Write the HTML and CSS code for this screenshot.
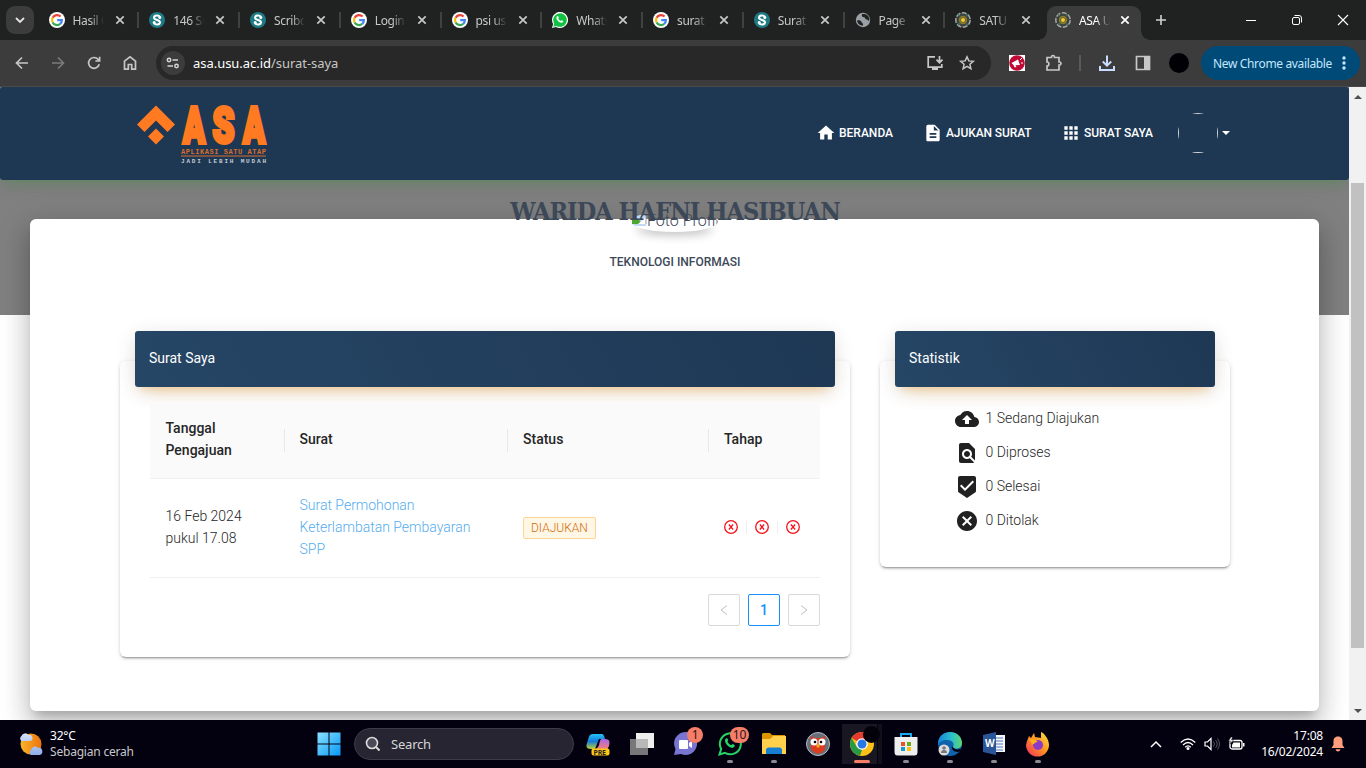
FILE: index.html
```html
<!DOCTYPE html>
<html lang="id">
<head>
<meta charset="utf-8">
<title>ASA USU</title>
<link rel="stylesheet" href="styles.css">
</head>
<body>
<svg class="defs" aria-hidden="true">
  <symbol id="google" viewBox="0 0 16 16"><circle cx="8" cy="8" r="8" fill="#fff"/><g fill="none" stroke-width="2.2"><path d="M11.6 4.6A5 5 0 0 0 3.6 5.7" stroke="#ea4335"/><path d="M3.6 5.7a5 5 0 0 0 0 4.7" stroke="#fbbc05"/><path d="M3.6 10.4a5 5 0 0 0 7.6 1.5" stroke="#34a853"/><path d="M8.2 8.1h4.7a5 5 0 0 1-1.7 3.8" stroke="#4285f4"/></g></symbol>
  <symbol id="scribd" viewBox="0 0 16 16"><circle cx="8" cy="8" r="8" fill="#1e7b85"/><path d="M11.200 5C9.500 2.800 5 3.200 5 5.800c0 2.700 6 1.700 6 4.500 0 2.700-4.600 2.900-6.200.900" fill="none" stroke="#fff" stroke-width="2"/><circle cx="10.800" cy="5.600" r="1.500" fill="#fff"/><circle cx="5.200" cy="10.400" r="1.500" fill="#fff"/></symbol>
  <symbol id="wa" viewBox="0 0 16 16"><path d="M0 16l1.100-4A8 8 0 1 1 4 14.900z" fill="#fff"/><path d="M1.300 14.700l.9-3.100a6.800 6.800 0 1 1 2.300 2.300z" fill="#12c143"/><path d="M5.100 4.300c.8-.6 1.300-.2 1.700 1.400l-.6.8c.6 1.200 1.300 1.900 2.500 2.500l.9-.8c1.700.6 1.900.9 1.300 1.900-1 1.400-3.100.7-4.900-1-1.700-1.800-2.200-3.700-.9-4.800z" fill="#fff"/></symbol>
  <symbol id="globe" viewBox="0 0 16 16"><circle cx="8" cy="8" r="7.200" fill="#9aa0a6"/><path d="M2 8.500c2-.5 4 0 4.500 1.500s2 1 1.500 3.500c-3 0-5.500-2-6-5zM7 2c-.5 2 0 3 2 3.300s.5 2 2.500 2.200 1.500 1.500 2.800 1.300c.5-3.300-1.300-6-4.300-6.800z" fill="#202222"/></symbol>
  <symbol id="usu" viewBox="0 0 16 16"><circle cx="8" cy="8" r="7.200" fill="#3a4146" stroke="#a5a6a3" stroke-width="1.500" stroke-dasharray="5 1.500"/><path d="M3 2.500l2 1.500M11 4l2-1.500M3 12.500l2-1M11 12l2 1" stroke="#39754d" stroke-width="1.500"/><circle cx="8" cy="8" r="4.200" fill="#8f7d24"/><circle cx="8" cy="8" r="2.500" fill="#f0cf28" stroke="#645e42"/></symbol>
  <symbol id="x" viewBox="0 0 10 10"><path d="M1.300 1.300l7.400 7.400M8.700 1.300L1.300 8.700" stroke="currentColor" stroke-width="1.700"/></symbol>
  <symbol id="xc" viewBox="0 0 14 14"><circle cx="7" cy="7" r="6.300" fill="none" stroke="#f5121d" stroke-width="1.300"/><path d="M4.900 4.500l4.200 5M9.100 4.500l-4.200 5" stroke="#f5121d" stroke-width="1.300"/></symbol>
</svg>

<header class="tabs">
  <div class="tab-search"><svg width="10" height="7" viewBox="0 0 10 7"><path d="M1 1l4 4 4-4" fill="none" stroke="#e3e3e3" stroke-width="1.800"/></svg></div>
  <div class="tab"><svg class="fav"><use href="#google"/></svg><span>Hasil Cari</span><svg class="close"><use href="#x"/></svg></div>
  <div class="tab"><svg class="fav"><use href="#scribd"/></svg><span>146 Surat</span><svg class="close"><use href="#x"/></svg></div>
  <div class="tab"><svg class="fav"><use href="#scribd"/></svg><span>Scribd</span><svg class="close"><use href="#x"/></svg></div>
  <div class="tab"><svg class="fav"><use href="#google"/></svg><span>Login</span><svg class="close"><use href="#x"/></svg></div>
  <div class="tab"><svg class="fav"><use href="#google"/></svg><span>psi usu</span><svg class="close"><use href="#x"/></svg></div>
  <div class="tab"><svg class="fav"><use href="#wa"/></svg><span>WhatsApp</span><svg class="close"><use href="#x"/></svg></div>
  <div class="tab"><svg class="fav"><use href="#google"/></svg><span>surat p</span><svg class="close"><use href="#x"/></svg></div>
  <div class="tab"><svg class="fav"><use href="#scribd"/></svg><span>Surat</span><svg class="close"><use href="#x"/></svg></div>
  <div class="tab"><svg class="fav"><use href="#globe"/></svg><span>Page</span><svg class="close"><use href="#x"/></svg></div>
  <div class="tab last"><svg class="fav"><use href="#usu"/></svg><span>SATU</span><svg class="close"><use href="#x"/></svg></div>
  <div class="tab active"><svg class="fav"><use href="#usu"/></svg><span>ASA U</span><svg class="close"><use href="#x"/></svg></div>
  <svg class="plus" width="12" height="12" viewBox="0 0 12 12"><path d="M6 1v10M1 6h10" stroke="#d0d0d0" stroke-width="1.600"/></svg>
  <div class="win">
    <svg width="12" height="12" viewBox="0 0 12 12"><path d="M1 6.500h10" stroke="#fff"/></svg>
    <svg width="12" height="12" viewBox="0 0 12 12"><g fill="none" stroke="#fff"><rect x="1.500" y="3.500" width="7" height="7" rx="1.500"/><path d="M3.500 1.500H8a2.500 2.500 0 0 1 2.500 2.500v4.500"/></g></svg>
    <svg width="12" height="12" viewBox="0 0 12 12"><path d="M1 1l10 10M11 1L1 11" stroke="#fff" stroke-width="1.100"/></svg>
  </div>
</header>

<div class="toolbar">
  <div class="slot"><svg width="16" height="16" viewBox="0 0 16 16"><path d="M14 8H3M8 2.500L2.500 8 8 13.500" class="ln"/></svg></div>
  <div class="slot dim"><svg width="16" height="16" viewBox="0 0 16 16"><path d="M2 8h11M8 2.500L13.500 8 8 13.500" class="ln"/></svg></div>
  <div class="slot"><svg width="16" height="16" viewBox="0 0 16 16"><path d="M13.200 9.200A5.400 5.400 0 1 1 12 4.300L13.500 6M13.600 1.800V6H9.400" class="ln"/></svg></div>
  <div class="slot"><svg width="16" height="16" viewBox="0 0 16 16"><path d="M2.500 6.200L8 1.800l5.500 4.400v8H9.700V9.500H6.300v4.700H2.500z" class="ln"/></svg></div>
  <div class="address">
    <div class="site"><svg width="14" height="12" viewBox="0 0 14 12"><g fill="none" stroke="#d5d5d5" stroke-width="1.500"><circle cx="3" cy="3" r="1.700"/><path d="M6.500 3H12M1.500 9h5.500"/><circle cx="10.500" cy="9" r="1.700"/></g></svg></div>
    <p class="url">asa.usu.ac.id<span>/surat-saya</span></p>
    <svg class="install" width="18" height="16" viewBox="0 0 18 16"><path d="M9 1.800H2.200v10.400h13.600V9M13.500 1v6.500M10.500 4.700l3 3 3-3" class="ln"/><path d="M6 12h6v3H6z" fill="#c7c7c7"/></svg>
    <svg width="16" height="16" viewBox="0 0 16 16"><path d="M8 1.800l1.800 4.100 4.500.4-3.400 3 1 4.400L8 11.400l-3.900 2.300 1-4.400-3.400-3 4.500-.4z" class="ln thin"/></svg>
  </div>
  <div class="slot ext"><svg width="16" height="16" viewBox="0 0 16 16"><path fill="#fff" d="M0 0h16v16H0z"/><circle cx="8" cy="8" r="7.800" fill="#bd0b35"/><path d="M2.500 8L9 4.500l2 5.500-4.500.2 1 2H5.500L4.500 10z" fill="#fff"/><path d="M11 5l2-2M12 8h2" stroke="#fff"/></svg></div>
  <div class="slot puzzle"><svg width="18" height="18" viewBox="0 0 18 18"><path d="M2 3.500h4.500V3a1.500 1.500 0 0 1 3 0v.5H14V8h.5a1.500 1.500 0 0 1 0 3H14v5H2v-4c2.500 0 2.500-4 0-4z" class="ln"/></svg></div>
  <i class="sep"></i>
  <div class="slot"><svg width="18" height="18" viewBox="0 0 18 18"><path d="M9 1.500v10M4.800 7.500L9 11.700l4.200-4.200M2 12v4h14v-4" fill="none" stroke="#c8dcff" stroke-width="2"/></svg></div>
  <div class="slot"><svg width="16" height="16" viewBox="0 0 16 16"><path d="M1.500 1.500h13v13h-13z" class="ln"/><path d="M9 1h6v14H9z" fill="#c7c7c7"/></svg></div>
  <div class="slot"><b class="profile"></b></div>
  <div class="update"><span>New Chrome available</span><svg width="4" height="16" viewBox="0 0 4 16"><g fill="#c2e7ff"><circle cx="2" cy="3" r="1.700"/><circle cx="2" cy="8" r="1.700"/><circle cx="2" cy="13" r="1.700"/></g></svg></div>
</div>

<div class="viewport">
  <main class="page">
    <nav class="navbar">
      <svg class="logo" width="132" height="62" viewBox="0 0 132 62">
        <path d="M20 3.500l19 19-7.500 7.500L20 18.500 8.500 30 1 22.500zM20 26.500l8 8-8 8-8-8z" fill="#ff7a21"/>
        <g class="asa"><text x="47" y="40.500" textLength="22" lengthAdjust="spacingAndGlyphs">A</text><text x="76.500" y="40.500" textLength="22" lengthAdjust="spacingAndGlyphs">S</text><text x="107" y="40.500" textLength="22" lengthAdjust="spacingAndGlyphs">A</text></g>
        <text class="tag" x="45" y="51.500" textLength="85">APLIKASI SATU ATAP</text>
        <path d="M45 54h85" stroke="#d96d2c"/>
        <text class="tag sub" x="45" y="61" textLength="85">JADI LEBIH MUDAH</text>
      </svg>
      <div class="links">
        <a class="l1"><svg class="ic"><path d="M8.300 16.600v-5h3.400v5h4.200V10h2.400L10 2.500 1.700 10h2.400v6.600z"/></svg>BERANDA</a>
        <a class="l2"><svg class="ic" viewBox="0 0 24 24"><path d="M14 2H6c-1.100 0-2 .9-2 2v16c0 1.100.9 2 2 2h12c1.100 0 2-.9 2-2V8l-6-6zm2 16H8v-2h8v2zm0-4H8v-2h8v2zm-3-5V3.500L18.500 9H13z"/></svg>AJUKAN SURAT</a>
        <a class="l3"><svg class="ic" viewBox="0 0 24 24"><path d="M4 8h4V4H4v4zm6 12h4v-4h-4v4zm-6 0h4v-4H4v4zm0-6h4v-4H4v4zm6 0h4v-4h-4v4zm6-10v4h4V4h-4zm-6 4h4V4h-4v4zm6 6h4v-4h-4v4zm0 6h4v-4h-4v4z"/></svg>SURAT SAYA</a>
        <a class="user"><i class="pic"><i></i></i><b class="caret"></b></a>
      </div>
    </nav>
    <section class="sheet">
      <div class="identity">
        <div class="photo"><svg width="16" height="16" viewBox="0 0 16 16"><path d="M1 1h10l4 4v10H1z" fill="#c3d8f5"/><path d="M1 13V9l5-2 4 4 5 1v1z" fill="#4ca62f"/><path d="M7 13L15 6v7z" fill="#fff"/><path d="M11 1l4 4v8" fill="none" stroke="#999"/></svg>Foto Profil</div>
        <h1>WARIDA HAFNI HASIBUAN</h1>
        <h2>TEKNOLOGI INFORMASI</h2>
      </div>
      <div class="columns">
        <article class="card letters">
          <h3>Surat Saya</h3>
          <div class="table">
            <div class="row head"><div>Tanggal Pengajuan</div><div>Surat</div><div>Status</div><div>Tahap</div></div>
            <div class="row"><div>16 Feb 2024 pukul 17.08</div><div><a>Surat Permohonan Keterlambatan Pembayaran SPP</a></div><div><span class="badge">DIAJUKAN</span></div><div class="steps"><svg><use href="#xc"/></svg><i></i><svg><use href="#xc"/></svg><i></i><svg><use href="#xc"/></svg></div></div>
          </div>
          <div class="pager">
            <span><svg width="8" height="12" viewBox="0 0 8 12"><path d="M7 1.500L1 6l6 4.500" fill="none" stroke="#bfbfbf"/></svg></span>
            <span class="on">1</span>
            <span><svg width="8" height="12" viewBox="0 0 8 12"><path d="M1 1.500L7 6l-6 4.500" fill="none" stroke="#bfbfbf"/></svg></span>
          </div>
        </article>
        <article class="card stats">
          <h3>Statistik</h3>
          <ul>
            <li><svg viewBox="0 0 24 24"><path d="M19.350 10.040C18.670 6.590 15.640 4 12 4 9.110 4 6.600 5.640 5.350 8.040 2.340 8.360 0 10.910 0 14c0 3.310 2.690 6 6 6h13c2.760 0 5-2.240 5-5 0-2.640-2.050-4.780-4.650-4.960zM14 13v4h-4v-4H7l5-5 5 5h-3z"/></svg>1 Sedang Diajukan</li>
            <li><svg viewBox="0 0 24 24"><path d="M20 19.590V8l-6-6H6c-1.100 0-1.990.9-1.990 2L4 20c0 1.100.89 2 1.990 2H18c.45 0 .85-.15 1.190-.4l-4.430-4.430c-.8.520-1.740.830-2.760.830-2.760 0-5-2.240-5-5s2.240-5 5-5 5 2.240 5 5c0 1.020-.31 1.960-.83 2.750L20 19.590zM9 13c0 1.660 1.340 3 3 3s3-1.340 3-3-1.340-3-3-3-3 1.340-3 3z"/></svg>0 Diproses</li>
            <li><svg viewBox="0 0 24 24"><path d="M19 1H5c-1.100 0-1.990.9-1.990 2L3 15.930c0 .69.350 1.300.88 1.660L12 23l8.110-5.410c.53-.36.880-.97.890-1.660L21 3c0-1.100-.9-2-2-2zm-9 15l-5-5 1.410-1.410L10 13.170l7.590-7.590L19 7l-9 9z"/></svg>0 Selesai</li>
            <li><svg viewBox="0 0 24 24"><path d="M12 2C6.470 2 2 6.470 2 12s4.470 10 10 10 10-4.470 10-10S17.530 2 12 2zm5 13.590L15.590 17 12 13.410 8.410 17 7 15.590 10.590 12 7 8.410 8.410 7 12 10.590 15.590 7 17 8.410 13.410 12 17 15.590z"/></svg>0 Ditolak</li>
          </ul>
        </article>
      </div>
    </section>
  </main>
  <aside class="scroll"><i class="up"></i><b></b><i class="down"></i></aside>
</div>

<footer class="taskbar">
  <div class="weather">
    <svg width="26" height="26" viewBox="0 0 26 26"><defs><linearGradient id="sun" x2="1"><stop stop-color="#f7b52b"/><stop offset="1" stop-color="#ee730d"/></linearGradient><linearGradient id="cl" x2="0" y2="1"><stop stop-color="#d5e2fa"/><stop offset="1" stop-color="#8daee9"/></linearGradient></defs><circle cx="13" cy="13" r="10.500" fill="url(#sun)"/><path d="M3.500 10a3 3 0 0 1 0-5 4 4 0 0 1 7-1 3 3 0 0 1 4 3c0 2-1 3-3 3zM13 24a3 3 0 0 1 0-5 4 4 0 0 1 7-2 3.500 3.500 0 1 1 1.500 7z" fill="url(#cl)"/></svg>
    <p>32°C<span>Sebagian cerah</span></p>
  </div>
  <svg class="start" width="24" height="24" viewBox="0 0 24 24"><defs><linearGradient id="win" x2="1" y2="1"><stop stop-color="#8ae4ff"/><stop offset="1" stop-color="#0796f7"/></linearGradient></defs><path fill="url(#win)" d="M.5.500h11v11H.5zM12.500.500h11v11h-11zM.5 12.500h11v11H.5zM12.500 12.500h11v11h-11z"/></svg>
  <div class="search"><svg width="16" height="16" viewBox="0 0 16 16"><circle cx="7" cy="7" r="5.500" fill="#4b4b57" stroke="#ddd" stroke-width="1.600"/><path d="M11 11l3.500 3.500" stroke="#ddd" stroke-width="2"/></svg>Search</div>
  <div class="apps">
    <div><svg viewBox="0 0 24 24"><defs><linearGradient id="cp" x2="0" y2="1"><stop stop-color="#20c3f7"/><stop offset=".5" stop-color="#167ad7"/><stop offset="1" stop-color="#bed530"/></linearGradient><linearGradient id="cp2" x2="0" y2="1"><stop stop-color="#a368ec"/><stop offset="1" stop-color="#ff806b"/></linearGradient></defs><path d="M7 2h8c3 0 3 2 4 5h-6L9 17H5c-5 0-5-3-4-6 2-6 2-9 6-9z" fill="url(#cp)"/><path d="M16 7h3c5 0 5 3 4 7l-2 4H9l3-3c2-2 1-8 4-8z" fill="url(#cp2)"/><rect x="5.500" y="16.500" width="18" height="7" rx="2" fill="#fdc817"/><text class="pre" x="7.500" y="22.600">PRE</text></svg></div>
    <div><svg viewBox="0 0 24 24"><path d="M6 1h18v15H6z" fill="#eee"/><path d="M0 7h18v16H0z" fill="#77777a"/><path d="M6 7h12v9H6z" fill="#b8b8b9"/></svg></div>
    <div><svg viewBox="0 0 24 24"><path d="M0 23l1.500-6A11.500 11.500 0 1 1 7 22z" fill="#7774d2"/><rect x="5" y="8" width="9" height="9" rx="1" fill="#fff"/><path d="M15 11l3-2v7l-3-2z" fill="#fff"/></svg><em>1</em></div>
    <div><svg viewBox="0 0 24 24"><path d="M1.500 22.500l1.700-5.600A10.500 10.500 0 1 1 7 20.800z" fill="none" stroke="#25d366" stroke-width="2"/><path d="M8 6.500c1-.8 1.700-.3 2.300 1.800l-.8 1.200c.8 1.800 2 2.900 3.600 3.700l1.400-1.300c2.300.8 2.700 1.500 1.900 2.900-1.200 2-4.500 1-6.900-1.400C7 10.800 6.200 8 8 6.500z" fill="#25d366"/></svg><em class="w">10</em><u></u></div>
    <div><svg viewBox="0 0 24 24"><path d="M0 3c0-2 1-2 2-2h6l2 2h13v7H0z" fill="#dc9400"/><path d="M0 7h8l3-3h13v18H0z" fill="#ffd04b"/><path d="M4 22v-5l2-1.500h12l2 1.500v5z" fill="#167fd0"/></svg><u></u></div>
    <div><svg viewBox="0 0 24 24"><circle cx="12" cy="12" r="11.500" fill="#67707a" stroke="#b5bbc0"/><path d="M5 4l4 2h6l4-2v13q-7 9-14 0z" fill="#dd3c1f"/><circle cx="8" cy="10" r="3.500" fill="#fff"/><circle cx="16" cy="10" r="3.500" fill="#fff"/><circle cx="9" cy="10" r="1.300"/><circle cx="15" cy="10" r="1.300"/><path d="M12 11l-2 3 2 2 2-2z" fill="#f5aa25"/></svg></div>
    <div class="cur"><svg viewBox="0 0 24 24"><circle cx="12" cy="12" r="12" fill="#fbc116"/><path d="M12 12L1.600 6A12 12 0 0 1 22.400 6z" fill="#e33b2e"/><path d="M1.600 6L6.800 15 12 18l0 0-2 5.800A12 12 0 0 1 1.600 6z" fill="#269a47"/><circle cx="12" cy="12" r="5.800" fill="#fff"/><circle cx="12" cy="12" r="4.500" fill="#2678e8"/></svg><s></s><u></u></div>
    <div><svg viewBox="0 0 24 24"><path d="M7 6V2h10v4" fill="none" stroke="#16a9ed" stroke-width="2"/><path d="M.5 5h23v15q0 3.500-3 3.500h-17q-3 0-3-3.500z" fill="#eee"/><path d="M7 10h4v4H7z" fill="#e6532c"/><path d="M13 10h4v4h-4z" fill="#6bab1c"/><path d="M7 15h4v4H7z" fill="#179bd7"/><path d="M13 15h4v4h-4z" fill="#ffc10d"/></svg><u></u></div>
    <div><svg viewBox="0 0 24 24"><defs><linearGradient id="edge" x2="1"><stop stop-color="#1684da"/><stop offset=".6" stop-color="#2bc2c9"/><stop offset="1" stop-color="#63d56a"/></linearGradient></defs><circle cx="12" cy="12" r="12" fill="#1162ac"/><path d="M0 11C1-3 23-4 24 11c0 6-7 7-9 4 2-4-1-7-6-7-5 0-8 2-9 5z" fill="url(#edge)"/><path d="M14 14c1 3 5 4 8 3l1-1c-1 3-2 4-3 4-4 0-7-3-6-6z" fill="#03010f"/><circle cx="6" cy="18" r="5.500" fill="#ddd"/><circle cx="6" cy="16" r="1.800" fill="#777"/><path d="M3 21q0-3 3-3t3 3z" fill="#777"/></svg><u></u></div>
    <div><svg viewBox="0 0 24 24"><path d="M12 3h11v17H12z" fill="#f4f7fc"/><path d="M14 6h7M14 9h7M14 12h7M14 15h7M14 18h7" stroke="#5578b4"/><path d="M1 3l13-3v23L1 20z" fill="#2a5699"/><text class="word" x="3" y="15">W</text></svg><u></u></div>
    <div><svg viewBox="0 0 24 24"><defs><linearGradient id="ff" x1="1" x2="0" y2="1"><stop stop-color="#ffe84a"/><stop offset=".45" stop-color="#ff981f"/><stop offset="1" stop-color="#f32961"/></linearGradient></defs><path d="M1 9l2-5 2 2 3-5 1 4 6 1V0c3 1 8 7 8 13a11.400 11.400 0 0 1-23 0z" fill="url(#ff)"/><circle cx="12" cy="13" r="5" fill="#8c3bc7"/><path d="M3 7c4-1 7 1 9 3-4 0-3 3-6 2z" fill="#ffb01c"/></svg><u></u></div>
  </div>
  <div class="tray">
    <svg class="chev" width="12" height="8" viewBox="0 0 12 8"><path d="M1 7l5-5 5 5" fill="none" stroke="#fff" stroke-width="1.500"/></svg>
    <svg width="16" height="14" viewBox="0 0 16 14"><g fill="none" stroke="#fff" stroke-width="1.300"><path d="M.7 5.500q7.300-7 14.600 0M3 8q5-5 10 0M5.200 10.200q2.800-2.800 5.600 0"/></g><circle cx="8" cy="11.500" r="1.500" fill="#fff"/></svg>
    <svg width="16" height="14" viewBox="0 0 16 14"><path d="M1 5h2.500L7 1.500v11L3.500 9H1z" fill="none" stroke="#fff" stroke-width="1.200"/><path d="M9.500 4.500q2 2.500 0 5M11.500 3q3.500 4 0 8M13.500 1.500q4 5.500 0 11" fill="none" stroke="#54535e"/></svg>
    <svg width="17" height="14" viewBox="0 0 17 14"><rect x="2" y="3.500" width="12" height="8.500" rx="2" fill="none" stroke="#fff" stroke-width="1.300"/><path d="M5.500 5.500H12v5H4V8zM15 6h1.500v3.500H15z" fill="#fff"/><path d="M3 0L.5 4H3L2 7l3.500-4H3.500L4.500 0z" fill="#fff" stroke="#03010f" stroke-width=".4"/></svg>
    <p>17:08<br>16/02/2024</p>
    <svg width="14" height="16" viewBox="0 0 14 16"><path d="M7 .5C3.500.500 2.500 3 2.500 5v4L.5 12h13l-2-3V5c0-2-1-4.500-4.500-4.500zM4.500 13.300h5Q9 15.500 7 15.500t-2.500-2.200z" fill="#ff9d7c"/></svg>
  </div>
</footer>
</body>
</html>
```
FILE: styles.css
```css
* { box-sizing: border-box; }
html, body { margin: 0; padding: 0; }
body { width: 1366px; height: 768px; overflow: hidden; display: flex; flex-direction: column; background: #fff; font-family: Roboto, sans-serif; font-size: 14px; }
p, h1, h2, h3, ul { margin: 0; padding: 0; }
svg { display: block; flex: none; overflow: visible; }
i, em { font-style: normal; }
.defs { display: none; }

/* Browser tab strip */
.tabs { flex: none; height: 40px; background: #202222; display: flex; align-items: center; font: 12px "Noto Sans", sans-serif; letter-spacing: -.35px; color: #c7c9c8; }
.tab-search { width: 28px; height: 28px; margin: 0 4.500px 0 6px; border-radius: 9px; background: #3c3c3c; display: flex; align-items: center; justify-content: center; flex: none; }
.tab { width: 100.750px; height: 16px; flex: none; display: flex; align-items: center; padding-left: 10px; border-right: 2px solid #404141; }
.tab.last { border-color: transparent; }
.fav { width: 16px; height: 16px; }
.tab span { width: 31px; margin: 0 11px 0 8px; overflow: hidden; white-space: nowrap; -webkit-mask-image: linear-gradient(90deg, #000 55%, transparent); mask-image: linear-gradient(90deg, #000 55%, transparent); }
.close { width: 10px; height: 10px; }
.tab.active { width: 94px; height: 34px; align-self: flex-end; border: 0; background: #3c3c3c; border-radius: 9px 9px 0 0; padding: 0 0 6px 8px; color: #fff; position: relative; margin-left: 1px; }
.tab.active .close { margin-left: -1px; }
.tab.active::before, .tab.active::after { content: ""; position: absolute; bottom: 0; width: 9px; height: 9px; }
.tab.active::before { left: -9px; background: radial-gradient(circle at 0 0, transparent 8.500px, #3c3c3c 9px); }
.tab.active::after { right: -9px; background: radial-gradient(circle at 100% 0, transparent 8.500px, #3c3c3c 9px); }
.plus { margin-left: 14px; }
.win { margin-left: auto; display: flex; gap: 34px; padding-right: 17px; }

/* Browser toolbar */
.toolbar { flex: none; height: 47px; background: #3c3c3c; border-bottom: 1px solid #4a4948; padding-left: 4px; display: flex; align-items: center; font-family: "Noto Sans", sans-serif; }
.slot { width: 36px; flex: none; display: flex; justify-content: center; }
.ln { fill: none; stroke: #c7c7c7; stroke-width: 1.700; }
.thin { stroke-width: 1.500; }
.dim { opacity: .45; }
.address { width: 835px; height: 34px; margin-left: 8px; border-radius: 17px; background: #282828; display: flex; align-items: center; padding: 0 16px 0 5px; }
.site { width: 24px; height: 24px; border-radius: 50%; background: #3c3c3c; display: flex; align-items: center; justify-content: center; margin-right: 8px; }
.url { color: #fff; font-size: 13px; flex: 1; letter-spacing: -.04px; }
.url span { color: #c7c7c7; }
.install { margin-right: 15px; }
.ext { margin-left: 8px; }
.puzzle { margin-left: 1px; }
.sep { width: 2px; height: 16px; background: #5a5a5a; margin: 0 8px 0 7px; }
.profile { width: 20px; height: 20px; border-radius: 50%; background: #000005; }
.update { width: 159px; height: 34px; margin-left: 4px; padding: 0 14px 0 12px; border-radius: 17px; background: #004a77; color: #c2e7ff; display: flex; align-items: center; justify-content: space-between; font-size: 12px; white-space: nowrap; letter-spacing: -.350px; }

/* Web page */
.viewport { height: 633px; flex: none; display: flex; overflow: hidden; }
.page { width: 1349px; flex: none; background: linear-gradient(#808080 228px, #fff 228px); overflow: hidden; }
.navbar { height: 93px; background: #1e3854; border-radius: 3px; padding: 0 119px 2px 136px; display: flex; align-items: center; justify-content: space-between; box-shadow: 0 4px 20px rgba(0,0,0,.1), 0 7px 12px -5px rgba(76,175,80,.46); }
.asa { font: 900 50px Roboto, sans-serif; fill: #ff7a21; stroke: #ff7a21; stroke-width: 4; stroke-linejoin: miter; }
.tag { font: 700 7px "Liberation Mono", monospace; fill: #d96d2c; }
.tag.sub { fill: #c3ccd3; font-size: 6px; }
.links { display: flex; align-items: center; color: #fff; font-size: 12px; font-weight: 500; }
.links a { display: flex; align-items: center; white-space: nowrap; }
.ic { width: 20px; height: 20px; margin-right: 3px; fill: #fff; }
.l1 { width: 107px; }
.l2 { width: 138px; letter-spacing: -.1px; }
.l3 { width: 117px; }
.pic { width: 40px; height: 40px; border-radius: 50%; overflow: hidden; display: block; }
.pic i { display: block; height: 40px; border: 1px solid #d7d7d7; }
.caret { border: 4px solid transparent; border-top-color: #fff; border-bottom: 0; margin-left: 4px; }
.sheet { width: 1289px; height: 492px; margin: 39px 0 0 30px; background: #fff; border-radius: 6px; padding: 0 89px 0 90px; box-shadow: 0 16px 24px 2px rgba(0,0,0,.14), 0 6px 30px 5px rgba(0,0,0,.12), 0 8px 10px -5px rgba(0,0,0,.2); }
.identity { position: relative; height: 112px; text-align: center; color: #3c4858; padding-top: 35px; }
.photo { position: absolute; left: 511px; top: -8px; width: 87px; height: 21px; border-radius: 50%; overflow: hidden; display: flex; white-space: nowrap; font-weight: 300; font-size: 16px; line-height: 19px; box-shadow: 0 5px 15px -8px rgba(0,0,0,.24), 0 8px 10px -5px rgba(0,0,0,.2); }
.identity h1 { position: absolute; left: 0; right: 0; top: -22px; font: 700 25px/30px "DejaVu Serif Condensed", "DejaVu Serif", serif; font-stretch: condensed; letter-spacing: -.980px; white-space: nowrap; }
.identity h2 { font-size: 12px; line-height: 16px; font-weight: 500; }
.columns { display: flex; gap: 30px; align-items: flex-start; }
.card { flex: none; border-radius: 6px; margin-top: 30px; box-shadow: 0 2px 2px 0 rgba(0,0,0,.14), 0 3px 1px -2px rgba(0,0,0,.2), 0 1px 5px 0 rgba(0,0,0,.12); }
.card h3 { height: 56px; margin: -30px 15px 0; padding: 0 14px; border-radius: 3px; color: #fff; font-size: 14px; font-weight: 400; line-height: 54px; background: linear-gradient(60deg, #264666, #1e3854); box-shadow: 0 12px 20px -10px rgba(255,152,0,.28), 0 4px 20px rgba(0,0,0,.12), 0 7px 8px -5px rgba(255,152,0,.2); }
.letters { width: 730px; height: 296px; }
.table { margin: 15px 30px 16px; line-height: 22px; font-weight: 300; color: #262626; }
.row { display: grid; grid-template-columns: 133.500px 223.500px 201px 112px; align-items: center; border-bottom: 1px solid #f0f0f0; }
.row > div { padding: 15px 16px 17px; }
.row > div:first-child { padding-left: 15.500px; }
.head { background: #fafafa; font-weight: 500; }
.head > div + div { background: linear-gradient(#e8e8e8, #e8e8e8) 0 50% / 1px 23px no-repeat; }
.row > div:nth-child(2) { padding-right: 30px; }
.table a { color: #55acee; }
.badge { display: inline-block; height: 22px; padding: 0 7px; border: 1px solid #ffd591; border-radius: 2px; background: #fff7e6; color: #d46b08; font-size: 12px; line-height: 20px; vertical-align: middle; }
.steps { display: flex; align-items: center; }
.steps svg { width: 14px; height: 14px; }
.steps i { width: 1px; height: 13px; background: #eee; margin: 0 8px; }
.pager { display: flex; justify-content: flex-end; gap: 8px; margin-right: 30px; }
.pager span { width: 32px; height: 32px; border: 1px solid #d9d9d9; border-radius: 2px; display: flex; align-items: center; justify-content: center; }
.pager .on { border-color: #1890ff; color: #1890ff; font-weight: 500; }
.stats { width: 350px; height: 206px; }
.stats ul { list-style: none; padding: 20px 0 0 75px; }
.stats li { height: 34px; display: flex; gap: 6.500px; font-weight: 300; line-height: 22px; color: #262626; }
.stats svg { width: 24px; height: 24px; fill: #212121; }
.scroll { width: 17px; background: #f1f1f1; position: relative; display: flex; flex-direction: column; align-items: center; padding: 8px 0 7px; }
.scroll b { width: 13px; height: 465px; margin-top: 84px; background: #c1c1c1; }
.scroll i { border: 4px solid transparent; }
.scroll .up { border-top: 0; border-bottom-color: #505050; }
.scroll .down { border-bottom: 0; border-top-color: #505050; margin-top: auto; }

/* Desktop taskbar */
.taskbar { height: 48px; flex: none; background: #03010f; display: flex; align-items: center; font: 12px/16px "Noto Sans", sans-serif; color: #fff; letter-spacing: -.2px; }
.weather { width: 317px; padding-left: 18px; display: flex; gap: 6px; align-items: center; }
.weather span { display: block; color: #c8c8cc; }
.start { margin-right: 13px; }
.search { width: 220px; height: 32px; border-radius: 16px; background: #272531; border: 1px solid #3d3b47; display: flex; align-items: center; gap: 10px; padding-left: 10px; color: #d5d5d8; font-size: 13px; }
.apps { display: flex; margin-left: 2px; }
.apps > div { width: 44px; height: 48px; display: flex; align-items: center; justify-content: center; position: relative; }
.apps svg { width: 24px; height: 24px; }
.apps u { position: absolute; bottom: 5px; left: 19px; width: 6px; height: 3px; border-radius: 2px; background: #8b8b91; }
.apps em { position: absolute; left: 23px; top: 7px; width: 16px; height: 16px; border-radius: 8px; background: #f67e67; color: #26151c; font-size: 12px; text-align: center; }
.apps em.w { left: 22px; width: 19px; }
.apps .cur { background: linear-gradient(#191722, #191722) 2px 4px / 35px 40px no-repeat, linear-gradient(#111019, #111019) 38px 4px / 4px 40px no-repeat; }
.apps .cur u { left: 14px; width: 16px; background: #f67e67; }
.cur s { position: absolute; left: 23px; top: 6px; width: 17px; height: 17px; border-radius: 50%; background: #03010a; }
.pre { font: 700 7px "Noto Sans", sans-serif; fill: #29251b; }
.word { font: 700 10px "Noto Sans", sans-serif; fill: #fff; }
.tray { margin-left: auto; display: flex; align-items: center; gap: 8px; padding-right: 21px; }
.tray p { width: 70px; text-align: right; }
.chev { margin-right: 10px; }
```
